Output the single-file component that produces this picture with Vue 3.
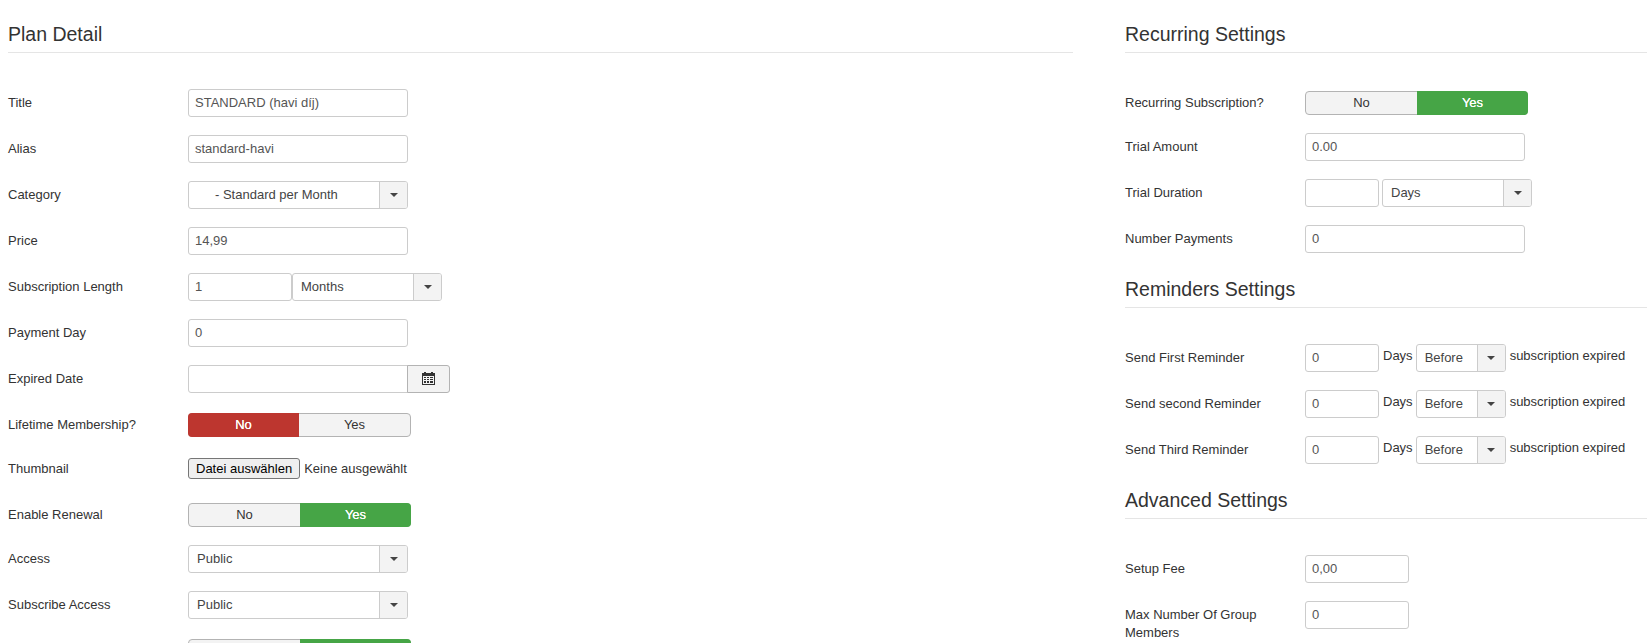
<script setup>
const plan = [
  { label: 'Title', type: 'input', value: 'STANDARD (havi díj)' },
  { label: 'Alias', type: 'input', value: 'standard-havi' },
  { label: 'Category', type: 'select', value: '- Standard per Month', indent: true },
  { label: 'Price', type: 'input', value: '14,99' },
  { label: 'Subscription Length', type: 'length' },
  { label: 'Payment Day', type: 'input', value: '0' },
  { label: 'Expired Date', type: 'date' },
  { label: 'Lifetime Membership?', type: 'toggle', on: 'no' },
  { label: 'Thumbnail', type: 'file' },
  { label: 'Enable Renewal', type: 'toggle', on: 'yes' },
  { label: 'Access', type: 'select', value: 'Public' },
  { label: 'Subscribe Access', type: 'select', value: 'Public' },
  { label: '', type: 'toggle', on: 'yes' }
]
const reminders = ['Send First Reminder', 'Send second Reminder', 'Send Third Reminder']
</script>

<template>
  <div class="page">
    <section class="col left">
      <h2 class="head">Plan Detail</h2>
      <div v-for="(r, i) in plan" :key="i" class="row" :class="{ 'row-file': r.type === 'file' }">
        <label class="lbl">{{ r.label }}</label>
        <div v-if="r.type === 'input'" class="ctl"><div class="field w220">{{ r.value }}</div></div>
        <div v-else-if="r.type === 'select'" class="ctl">
          <div class="select w220" :class="{ indent: r.indent }">
            <span class="sel-text">{{ r.value }}</span>
            <span class="sel-btn"><i class="caret"></i></span>
          </div>
        </div>
        <div v-else-if="r.type === 'length'" class="ctl">
          <div class="field w104">1</div>
          <div class="select w150">
            <span class="sel-text">Months</span>
            <span class="sel-btn"><i class="caret"></i></span>
          </div>
        </div>
        <div v-else-if="r.type === 'date'" class="ctl">
          <div class="field w220 date-f"></div>
          <div class="cal-btn">
            <svg width="13" height="13" viewBox="0 0 13 13">
              <path d="M2 0h2v1h5V0h2v1h2v12H0V1h2z" fill="#333" />
              <path d="M1 4h11v8H1z" fill="#f3f3f3" />
              <path d="M2 5h2v1H2zM5 5h2v1H5zM8 5h3v1H8zM2 7h2v1H2zM5 7h2v1H5zM8 7h3v1H8zM2 9h2v2H2zM5 9h2v2H5zM8 9h3v2H8z" fill="#333" />
            </svg>
          </div>
        </div>
        <div v-else-if="r.type === 'toggle'" class="ctl">
          <div class="toggle">
            <span class="seg" :class="{ red: r.on === 'no' }">No</span>
            <span class="seg" :class="{ green: r.on === 'yes' }">Yes</span>
          </div>
        </div>
        <div v-else-if="r.type === 'file'" class="ctl file-ctl">
          <span class="file-btn">Datei auswählen</span>
          <span class="file-none">Keine ausgewählt</span>
        </div>
      </div>
    </section>

    <section class="col right">
      <h2 class="head">Recurring Settings</h2>
      <div class="row">
        <label class="lbl">Recurring Subscription?</label>
        <div class="ctl">
          <div class="toggle">
            <span class="seg">No</span>
            <span class="seg green">Yes</span>
          </div>
        </div>
      </div>
      <div class="row">
        <label class="lbl">Trial Amount</label>
        <div class="ctl"><div class="field w220">0.00</div></div>
      </div>
      <div class="row">
        <label class="lbl">Trial Duration</label>
        <div class="ctl">
          <div class="field w74"></div>
          <div class="select w150 gap3">
            <span class="sel-text">Days</span>
            <span class="sel-btn"><i class="caret"></i></span>
          </div>
        </div>
      </div>
      <div class="row">
        <label class="lbl">Number Payments</label>
        <div class="ctl"><div class="field w220">0</div></div>
      </div>

      <h2 class="head">Reminders Settings</h2>
      <div v-for="r in reminders" :key="r" class="row">
        <label class="lbl">{{ r }}</label>
        <div class="ctl">
          <div class="field w74">0</div>
          <span class="txt days">Days</span>
          <div class="select w90">
            <span class="sel-text">Before</span>
            <span class="sel-btn"><i class="caret"></i></span>
          </div>
          <span class="txt">subscription expired</span>
        </div>
      </div>

      <h2 class="head">Advanced Settings</h2>
      <div class="row">
        <label class="lbl">Setup Fee</label>
        <div class="ctl"><div class="field w104">0,00</div></div>
      </div>
      <div class="row">
        <label class="lbl two">Max Number Of Group Members</label>
        <div class="ctl"><div class="field w104">0</div></div>
      </div>
    </section>
  </div>
</template>

<style>
html, body { margin: 0; background: #fff; overflow: hidden; }
</style>

<style scoped>
.page {
  display: flex;
  height: 643px;
  box-sizing: border-box;
  padding-top: 16px;
  overflow: hidden;
  font-family: "Liberation Sans", Arial, sans-serif;
  font-size: 13px;
  color: #333;
  background: #fff;
}
.col { flex: none; box-sizing: border-box; }
.left { width: 1065px; margin-left: 8px; }
.right { width: 522px; margin-left: 52px; }
.head {
  margin: 0 0 36px;
  height: 37px;
  box-sizing: border-box;
  line-height: 36px;
  font-size: 19.5px;
  font-weight: 400;
  color: #333;
  border-bottom: 1px solid #e5e5e5;
}
.row { display: flex; margin-bottom: 18px; }
.row-file { height: 28px; }
.lbl { flex: none; width: 180px; line-height: 18px; padding-top: 5px; box-sizing: border-box; }
.lbl.two { padding-right: 15px; }
.ctl { display: flex; align-items: flex-start; }
.field, .select {
  box-sizing: border-box;
  height: 28px;
  border: 1px solid #ccc;
  border-radius: 3px;
  background: #fff;
  color: #555;
  line-height: 25px;
  flex: none;
}
.field { padding: 0 6px; }
.w220 { width: 220px; }
.w104 { width: 104px; }
.w74 { width: 74px; }
.w150 { width: 150px; }
.w90 { width: 90px; }
.gap3 { margin-left: 3px; }
.select { display: flex; }
.sel-text { flex: 1; padding-left: 8px; color: #444; }
.indent .sel-text { padding-left: 26px; }
.sel-btn {
  flex: none;
  width: 27px;
  background: #f3f3f3;
  border-left: 1px solid #ccc;
  border-radius: 0 2px 2px 0;
  display: flex;
  align-items: center;
  justify-content: center;
}
.caret {
  width: 0;
  height: 0;
  border-left: 4px solid transparent;
  border-right: 4px solid transparent;
  border-top: 4px solid #444;
}
.date-f { border-radius: 3px 0 0 3px; }
.cal-btn {
  box-sizing: border-box;
  width: 43px;
  height: 28px;
  margin-left: -1px;
  border: 1px solid #b3b3b3;
  border-radius: 0 3px 3px 0;
  background: #f3f3f3;
  display: flex;
  align-items: center;
  justify-content: center;
  padding-bottom: 2px;
}
.toggle {
  box-sizing: border-box;
  display: flex;
  width: 223px;
  height: 24px;
  margin-top: 2px;
  border: 1px solid #b3b3b3;
  border-radius: 4px;
  background: #f3f3f3;
}
.seg { flex: 1 1 0; text-align: center; line-height: 21px; color: #333; }
.seg.red {
  background: #bd362f;
  color: #fff;
  margin: -1px 0 -1px -1px;
  line-height: 23px;
  border-radius: 4px 0 0 4px;
  text-shadow: 0 0 .5px #fff;
}
.seg.green {
  background: #46a546;
  color: #fff;
  margin: -1px -1px -1px 0;
  line-height: 23px;
  border-radius: 0 4px 4px 0;
  text-shadow: 0 0 .5px #fff;
}
.file-ctl { align-items: center; height: 21px; margin-top: 3px; }
.file-btn {
  box-sizing: border-box;
  height: 21px;
  line-height: 19px;
  padding: 0 7px;
  border: 1px solid #767676;
  border-radius: 3px;
  background: #efefef;
  color: #000;
  font-size: 13px;
}
.file-none { margin-left: 4px; color: #333; }
.txt { line-height: 18px; padding-top: 3px; margin: 0 4px; }
.txt.days { margin-right: 3px; }
</style>
